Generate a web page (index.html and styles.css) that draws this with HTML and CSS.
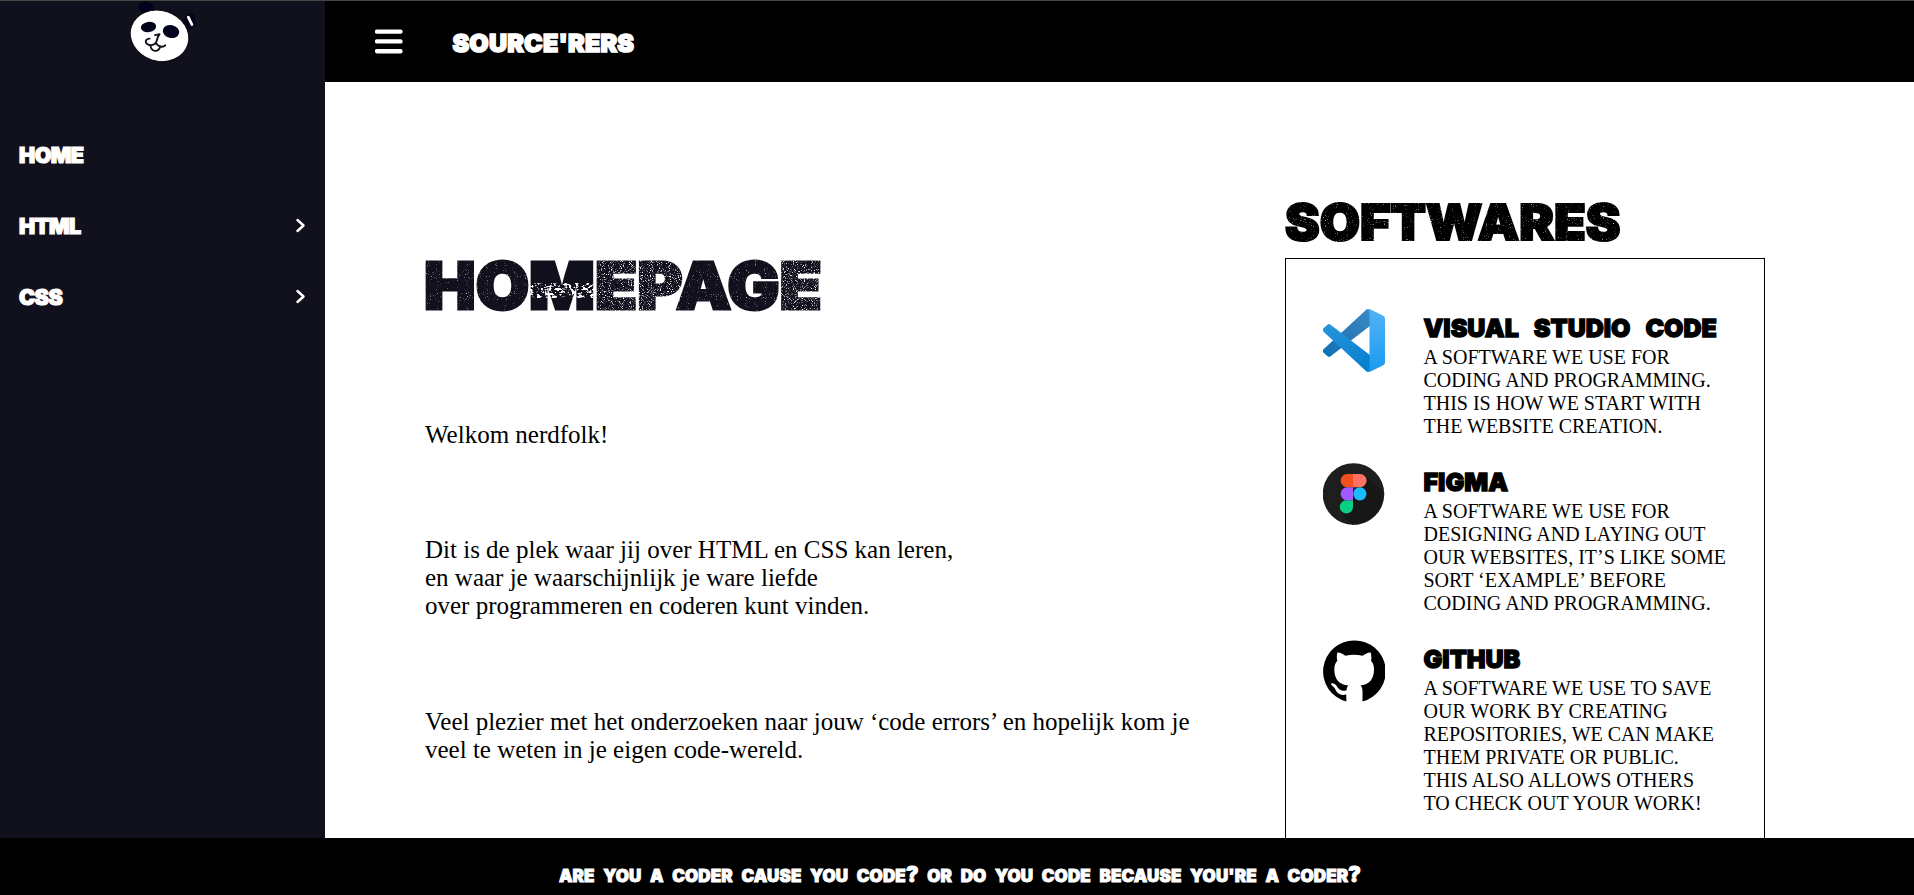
FILE: index.html
```html
<!DOCTYPE html>
<html lang="nl">
<head>
<meta charset="utf-8">
<title>Source'rers</title>
<link rel="stylesheet" href="styles.css">
</head>
<body>
<svg class="defs" width="0" height="0" aria-hidden="true">
  <filter id="grain-light" x="-0.05" y="0" width="1.1" height="1" color-interpolation-filters="sRGB">
    <feTurbulence type="fractalNoise" baseFrequency="0.95" numOctaves="1" seed="4" result="n"/>
    <feColorMatrix in="n" type="matrix" values="0 0 0 0 0  0 0 0 0 0  0 0 0 0 0  4 0 0 0 -2.55" result="m"/>
    <feComposite in="SourceGraphic" in2="m" operator="out"/>
  </filter>
  <filter id="grain-heavy" x="-0.05" y="0" width="1.1" height="1" color-interpolation-filters="sRGB">
    <feTurbulence type="fractalNoise" baseFrequency="0.95" numOctaves="2" seed="9" result="n"/>
    <feColorMatrix in="n" type="matrix" values="0 0 0 0 0  0 0 0 0 0  0 0 0 0 0  4.5 0 0 0 -2.45" result="m"/>
    <feComposite in="SourceGraphic" in2="m" operator="out"/>
  </filter>
  <filter id="grain-torn" x="-0.05" y="0" width="1.1" height="1" primitiveUnits="objectBoundingBox" color-interpolation-filters="sRGB">
    <feTurbulence type="fractalNoise" baseFrequency="0.28 0.4" numOctaves="3" seed="12" x="0" y="0.48" width="1" height="0.17" result="n"/>
    <feColorMatrix in="n" type="matrix" values="0 0 0 0 0  0 0 0 0 0  0 0 0 0 0  9 0 0 0 -4.6" x="0" y="0.48" width="1" height="0.17" result="m"/>
    <feComposite in="SourceGraphic" in2="m" operator="out" x="-0.05" y="0" width="1.1" height="1"/>
  </filter>
</svg>
<div class="page">
  <aside class="sidebar">
    <svg class="logo" width="100" height="70" viewBox="0 0 100 70">
      <ellipse cx="36" cy="7.500" rx="7.500" ry="5.800" fill="#01011f"/>
      <path d="M73 20l5-7 6 1 2 10-6 6-5-1z" fill="#05051c"/>
      <path d="M78.300 17.200l3.600 7.300" stroke="#fff" stroke-width="2.800" stroke-linecap="round"/>
      <ellipse cx="49.500" cy="35.800" rx="29.700" ry="25.300" transform="rotate(18 49.500 35.800)" fill="#fff" stroke="#0a0a12" stroke-width="1"/>
      <ellipse cx="38.500" cy="27" rx="7.700" ry="5.200" transform="rotate(-10 38.500 27)" fill="#02021c"/>
      <ellipse cx="61" cy="31.500" rx="8.300" ry="6.500" transform="rotate(12 61 31.500)" fill="#02021c"/>
      <path d="M45 34.300l4.500-.8-1.600 2.600-1.700 5.400c-2 3.500-8 3.800-10.200.4-1-2.200.8-4.200 3.600-4.100M46 42.500c2 3.500 7 4.500 9.200 2M40.500 44.500c.4 7 8 7.400 9.800 1.300" transform="translate(0 .8)" fill="none" stroke="#11101d" stroke-width="1.900" stroke-linecap="round" stroke-linejoin="round"/>
    </svg>
    <nav class="menu">
      <a class="menu-item"><span>HOME</span></a>
      <a class="menu-item"><span>HTML</span><svg class="chevron" width="11" height="15" viewBox="0 0 11 15"><path d="M2.500 2l6 5.500-6 5.500"/></svg></a>
      <a class="menu-item"><span>CSS</span><svg class="chevron" width="11" height="15" viewBox="0 0 11 15"><path d="M2.500 2l6 5.500-6 5.500"/></svg></a>
    </nav>
  </aside>
  <header class="topbar">
    <svg class="burger" width="28" height="25" viewBox="0 0 28 25"><path d="M2 2.600h23.500M2 12.400h23.500M2 22.200h23.500"/></svg>
    <span class="brand">SOURCE'RERS</span>
  </header>
  <main class="content">
    <section class="intro">
      <h1 class="title"><span class="worn">HO</span><span class="torn">M</span><span class="rough">EP</span><span class="worn">AG</span><span class="rough">E</span></h1>
      <p>Welkom nerdfolk!</p>
      <p>Dit is de plek waar jij over HTML en CSS kan leren,<br>en waar je waarschijnlijk je ware liefde<br>over programmeren en coderen kunt vinden.</p>
      <p>Veel plezier met het onderzoeken naar jouw ‘code errors’ en hopelijk kom je<br>veel te weten in je eigen code-wereld.</p>
    </section>
    <section class="software">
      <h2 class="software-title">SOFTWARES</h2>
      <div class="software-box">
        <article class="tool">
          <svg class="tool-icon" width="62" height="63" viewBox="0 0 100 100" preserveAspectRatio="none">
            <defs>
              <linearGradient id="vs-a" x1="1" y1="0" x2="0" y2="1"><stop offset="0" stop-color="#3d8fca"/><stop offset=".6" stop-color="#2878b4"/><stop offset="1" stop-color="#0a73b9"/></linearGradient>
              <linearGradient id="vs-b" x1="0" y1="0" x2="1" y2="1"><stop offset="0" stop-color="#2796dc"/><stop offset="1" stop-color="#007acc"/></linearGradient>
              <linearGradient id="vs-c" x1="0" y1="0" x2="0" y2="1"><stop offset="0" stop-color="#52b3f5"/><stop offset="1" stop-color="#1a9bf1"/></linearGradient>
            </defs>
            <path d="M96.500 10.800L75.900.9a6.200 6.200 0 0 0-7.100 1.200L1.300 63.600a4.200 4.200 0 0 0 0 6.200l5.500 5a4.200 4.200 0 0 0 5.400.2L93.400 13.400a4.100 4.100 0 0 1 6.600 3.300v-.3a6.300 6.300 0 0 0-3.500-5.600z" fill="url(#vs-a)"/>
            <path d="M96.500 89.200l-20.600 9.900a6.200 6.200 0 0 1-7.100-1.200L1.300 36.400a4.200 4.200 0 0 1 0-6.200l5.500-5a4.200 4.200 0 0 1 5.400-.2l81.200 61.600a4.100 4.100 0 0 0 6.600-3.300v.3a6.300 6.300 0 0 1-3.500 5.600z" fill="url(#vs-b)"/>
            <path d="M75.900 99.100a6.200 6.200 0 0 1-7.100-1.200 3.700 3.700 0 0 0 6.200-2.600V4.700a3.700 3.700 0 0 0-6.200-2.600A6.200 6.200 0 0 1 75.900.9l20.600 9.900a6.300 6.300 0 0 1 3.500 5.600v67.200a6.300 6.300 0 0 1-3.500 5.600z" fill="url(#vs-c)"/>
          </svg>
          <div class="tool-text">
            <h3>VISUAL STUDIO CODE</h3>
            <p>A SOFTWARE WE USE FOR<br>CODING AND PROGRAMMING.<br>THIS IS HOW WE START WITH<br>THE WEBSITE CREATION.</p>
          </div>
        </article>
        <article class="tool">
          <svg class="tool-icon" width="62" height="63" viewBox="0 0 62 63">
            <circle cx="30.500" cy="31" r="30.800" fill="#1e1e1e"/>
            <path d="M42 14l18 14a30.800 30.800 0 0 1-31 33.700L20 52z" fill="#171717"/>
            <path d="M30 11h-5.800a6.600 6.600 0 0 0 0 13.200H30z" fill="#f24e1e"/>
            <path d="M30 11h7a6.600 6.600 0 0 1 0 13.200h-7z" fill="#ff7262"/>
            <path d="M30 24.200h-5.800a6.600 6.600 0 0 0 0 13.200H30z" fill="#a259ff"/>
            <circle cx="36.900" cy="30.800" r="6.600" fill="#1abcfe"/>
            <path d="M30 37.400h-5.800a6.600 6.600 0 1 0 5.800 6.600z" fill="#0acf83"/>
          </svg>
          <div class="tool-text">
            <h3>FIGMA</h3>
            <p>A SOFTWARE WE USE FOR<br>DESIGNING AND LAYING OUT<br>OUR WEBSITES, IT’S LIKE SOME<br>SORT ‘EXAMPLE’ BEFORE<br>CODING AND PROGRAMMING.</p>
          </div>
        </article>
        <article class="tool">
          <svg class="tool-icon" width="62" height="63" viewBox="0 0 62 63">
            <path d="M31 .5a31 31 0 0 0-7.700 61V54.600C14 56.200 13.500 50.500 11.500 48 10 46 8 45.200 8 44c0-1.300 3.500-1.200 5.500 1.800 2.500 4.500 6 6 10 4.500.2-2 .6-3.700 1.800-4.800C16.500 44.500 11.300 39.500 11.300 29.500c0-3.700 1-6.500 3-8.700-.5-2-.8-5 .1-8.300 2.200-.4 5 .9 8 3.300a34 34 0 0 1 17.200 0c3-2.400 5.800-3.700 8.100-3.300.9 3.300.8 6.300.3 8.300 2 2.200 3 5 3 8.700 0 10-5.200 15-13.500 16 1.300 1.200 2 3 2 6v10A31 31 0 0 0 31 .5z"/>
          </svg>
          <div class="tool-text">
            <h3>GITHUB</h3>
            <p>A SOFTWARE WE USE TO SAVE<br>OUR WORK BY CREATING<br>REPOSITORIES, WE CAN MAKE<br>THEM PRIVATE OR PUBLIC.<br>THIS ALSO ALLOWS OTHERS<br>TO CHECK OUT YOUR WORK!</p>
          </div>
        </article>
      </div>
    </section>
  </main>
  <footer class="footer">ARE YOU A CODER CAUSE YOU CODE<span class="mark">?</span> OR DO YOU CODE BECAUSE YOU'RE A CODER<span class="mark">?</span></footer>
</div>
</body>
</html>
```
FILE: styles.css
```css
* { box-sizing: border-box; margin: 0; padding: 0; }

body {
  background: #fff;
  color: #000;
  font-family: "Liberation Serif", "Times New Roman", serif;
  overflow: hidden;
}

.defs { position: absolute; }

.page {
  display: grid;
  grid-template: 81px minmax(0, 1fr) 57px / 325px minmax(0, 1fr);
  height: 895px;
  border-top: 1px solid #454744;
}

.sidebar,
.brand,
.title,
.software-title,
.tool h3,
.footer {
  font-family: Inter, "Liberation Sans", sans-serif;
  font-weight: 900;
}

.sidebar { grid-row: 1 / 3; background: #11101d; color: #fff; }
.logo { display: block; margin: -1px 0 0 110px; }

.menu { padding: 49px 19px 0; }
.menu-item {
  display: flex;
  align-items: center;
  justify-content: space-between;
  height: 71px;
  font-size: 21.500px;
  letter-spacing: -0.5px;
  -webkit-text-stroke: 1.2px #fff;
}
.chevron { fill: none; stroke: #fff; stroke-width: 2.5; stroke-linecap: round; stroke-linejoin: round; }

.topbar { display: flex; align-items: center; padding-left: 50px; background: #000; color: #fff; }
.burger { margin-right: 49.500px; fill: none; stroke: #fff; stroke-width: 4.4; stroke-linecap: round; }
.brand { padding-top: 2px; font-size: 25px; letter-spacing: 0.2px; -webkit-text-stroke: 1.6px #fff; }

.content { display: flex; overflow: hidden; padding-left: 100px; }

.intro { width: 860px; padding-top: 164px; }
.title {
  height: 80px;
  margin-bottom: 95px;
  color: #11101d;
  font-size: 65px;
  line-height: 80px;
  white-space: nowrap;
  transform: translateX(-1px) scaleX(1.06);
  transform-origin: left;
  -webkit-text-stroke: 3px #11101d;
}
.worn { filter: url(#grain-light); }
.torn { filter: url(#grain-torn); }
.rough { filter: url(#grain-heavy); }
.intro p { margin-bottom: 87px; font-size: 25px; line-height: 28px; white-space: nowrap; }
.intro p:nth-of-type(2) { margin-bottom: 88px; }

.software { width: 480px; padding-top: 110px; }
.software-title {
  height: 60px;
  margin-bottom: 6px;
  font-size: 50px;
  line-height: 60px;
  transform: scaleX(1.04);
  transform-origin: left;
  -webkit-text-stroke: 2.2px #000;
  filter: url(#grain-light);
}
.software-box {
  display: flex;
  flex-direction: column;
  gap: 25px;
  height: 700px;
  padding: 50px 0 0 37px;
  border: 1px solid #000;
}
.tool { display: flex; gap: 38.500px; }
.tool-icon { flex: none; }
.tool-text { padding-top: 2px; white-space: nowrap; }
.tool h3 { margin-bottom: 1px; font-size: 25px; line-height: 34px; letter-spacing: 0; word-spacing: 10px; -webkit-text-stroke: 1.3px #000; }
.tool p { font-size: 20px; line-height: 23px; }

.footer {
  grid-column: 1 / 3;
  padding: 26px 0 0 6px;
  background: #000;
  color: #fff;
  font-size: 17px;
  line-height: 24px;
  letter-spacing: 0.15px;
  word-spacing: 5px;
  text-align: center;
  -webkit-text-stroke: 0.9px #fff;
}
.mark { font-size: 21px; line-height: 1; }
```
